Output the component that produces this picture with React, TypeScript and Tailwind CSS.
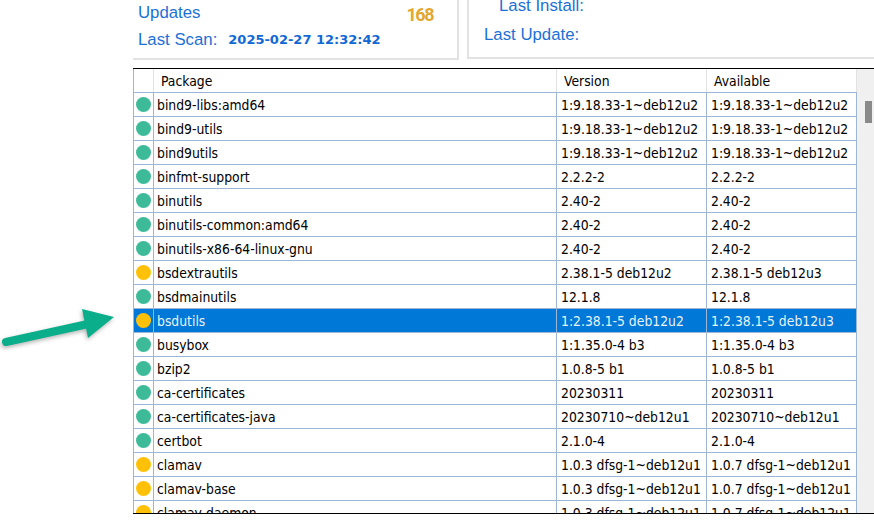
type Row = { name: string; version: string; available: string; pending?: boolean; selected?: boolean };

const ROWS: Row[] = [
  { name: "bind9-libs:amd64", version: "1:9.18.33-1~deb12u2", available: "1:9.18.33-1~deb12u2" },
  { name: "bind9-utils", version: "1:9.18.33-1~deb12u2", available: "1:9.18.33-1~deb12u2" },
  { name: "bind9utils", version: "1:9.18.33-1~deb12u2", available: "1:9.18.33-1~deb12u2" },
  { name: "binfmt-support", version: "2.2.2-2", available: "2.2.2-2" },
  { name: "binutils", version: "2.40-2", available: "2.40-2" },
  { name: "binutils-common:amd64", version: "2.40-2", available: "2.40-2" },
  { name: "binutils-x86-64-linux-gnu", version: "2.40-2", available: "2.40-2" },
  { name: "bsdextrautils", version: "2.38.1-5 deb12u2", available: "2.38.1-5 deb12u3", pending: true },
  { name: "bsdmainutils", version: "12.1.8", available: "12.1.8" },
  { name: "bsdutils", version: "1:2.38.1-5 deb12u2", available: "1:2.38.1-5 deb12u3", pending: true, selected: true },
  { name: "busybox", version: "1:1.35.0-4 b3", available: "1:1.35.0-4 b3" },
  { name: "bzip2", version: "1.0.8-5 b1", available: "1.0.8-5 b1" },
  { name: "ca-certificates", version: "20230311", available: "20230311" },
  { name: "ca-certificates-java", version: "20230710~deb12u1", available: "20230710~deb12u1" },
  { name: "certbot", version: "2.1.0-4", available: "2.1.0-4" },
  { name: "clamav", version: "1.0.3 dfsg-1~deb12u1", available: "1.0.7 dfsg-1~deb12u1", pending: true },
  { name: "clamav-base", version: "1.0.3 dfsg-1~deb12u1", available: "1.0.7 dfsg-1~deb12u1", pending: true },
  { name: "clamav-daemon", version: "1.0.3 dfsg-1~deb12u1", available: "1.0.7 dfsg-1~deb12u1", pending: true },
];

function TableRow({ row }: { row: Row }) {
  return (
    <div
      className={`flex h-6 shrink-0 border-b border-[#9db6d6] text-[13.8px] leading-[25px] ${
        row.selected ? "bg-[#0078d7] text-[#e8f2fb]" : "bg-white text-black"
      }`}
    >
      <div className="flex w-5 shrink-0 items-center justify-center border-r border-[#9db6d6]">
        <span className={`size-[15px] rounded-full ${row.pending ? "bg-[#ffc107]" : "bg-[#3dbb98]"}`} />
      </div>
      <div className="w-[403px] shrink-0 truncate border-r border-[#9db6d6] pl-[3px]">{row.name}</div>
      <div className="w-[150px] shrink-0 truncate border-r border-[#9db6d6] pl-1">{row.version}</div>
      <div className="w-[150px] shrink-0 truncate border-r border-[#9db6d6] pl-1">{row.available}</div>
    </div>
  );
}

export default function App() {
  return (
    <div className="relative h-[523px] w-[874px] overflow-hidden bg-white font-['DejaVu_Sans_Condensed','Noto_Sans',sans-serif]">
      {/* Summary panels */}
      <div className="flex h-[68px] items-start pl-[133px] font-['Liberation_Sans',sans-serif] text-[16.8px] text-[#1b70d8]">
        <div className="flex h-[60px] w-[326px] flex-col border-r-2 border-b-2 border-[#e2e2e2] pl-[5px]">
          <div className="flex h-[26px] items-center justify-between pr-6">
            <span>Updates</span>
            <span className="mt-[3px] font-['Roboto',sans-serif] text-[18px] font-bold tracking-[-1.5px] text-[#e2a72e]">168</span>
          </div>
          <div className="mt-[2px] flex h-[24px] items-center gap-[11px]">
            <span>Last Scan:</span>
            <span className="font-['DejaVu_Sans',sans-serif] text-[13px] font-bold text-[#1268d4]">2025-02-27 12:32:42</span>
          </div>
        </div>
        <div className="ml-2 flex h-[59px] flex-1 flex-col border-b-2 border-l-2 border-[#e2e2e2] pl-[15px]">
          <span className="-mt-[4px] h-[26px] pl-[15px] leading-[20px]">Last Install:</span>
          <span>Last Update:</span>
        </div>
      </div>

      {/* Package table */}
      <div className="ml-[133px] flex h-[446px] border-t border-b border-black">
        <div className="flex w-[724px] shrink-0 flex-col overflow-hidden border-l border-[#9db6d6]">
          <div className="flex h-6 shrink-0 border-b border-[#9db6d6] bg-white text-[13.8px] leading-[25px] text-black">
            <div className="w-5 shrink-0 border-r border-[#e2e2e2]" />
            <div className="w-[403px] shrink-0 border-r border-[#e2e2e2] pl-[7px]">Package</div>
            <div className="w-[150px] shrink-0 border-r border-[#e2e2e2] pl-[7px]">Version</div>
            <div className="w-[150px] shrink-0 border-r border-[#e2e2e2] pl-[7px]">Available</div>
          </div>
          {ROWS.map((row) => (
            <TableRow key={row.name} row={row} />
          ))}
        </div>
        <div className="flex-1 bg-[#f0f0f0] pt-[32px] pl-2">
          <div className="h-[22px] w-[7px] bg-[#8a8a8a]" />
        </div>
      </div>

      {/* Callout arrow */}
      <svg className="absolute top-[305px] left-0 drop-shadow-[-1px_2px_2px_rgba(0,0,0,0.3)]" width="120" height="48" viewBox="0 0 120 48" fill="none">
        <path d="M6 37 L88 19" stroke="#0bae8b" strokeWidth="8" strokeLinecap="round" />
        <path d="M82 4 L114 12 L88 33 Z" fill="#0bae8b" />
      </svg>
    </div>
  );
}
